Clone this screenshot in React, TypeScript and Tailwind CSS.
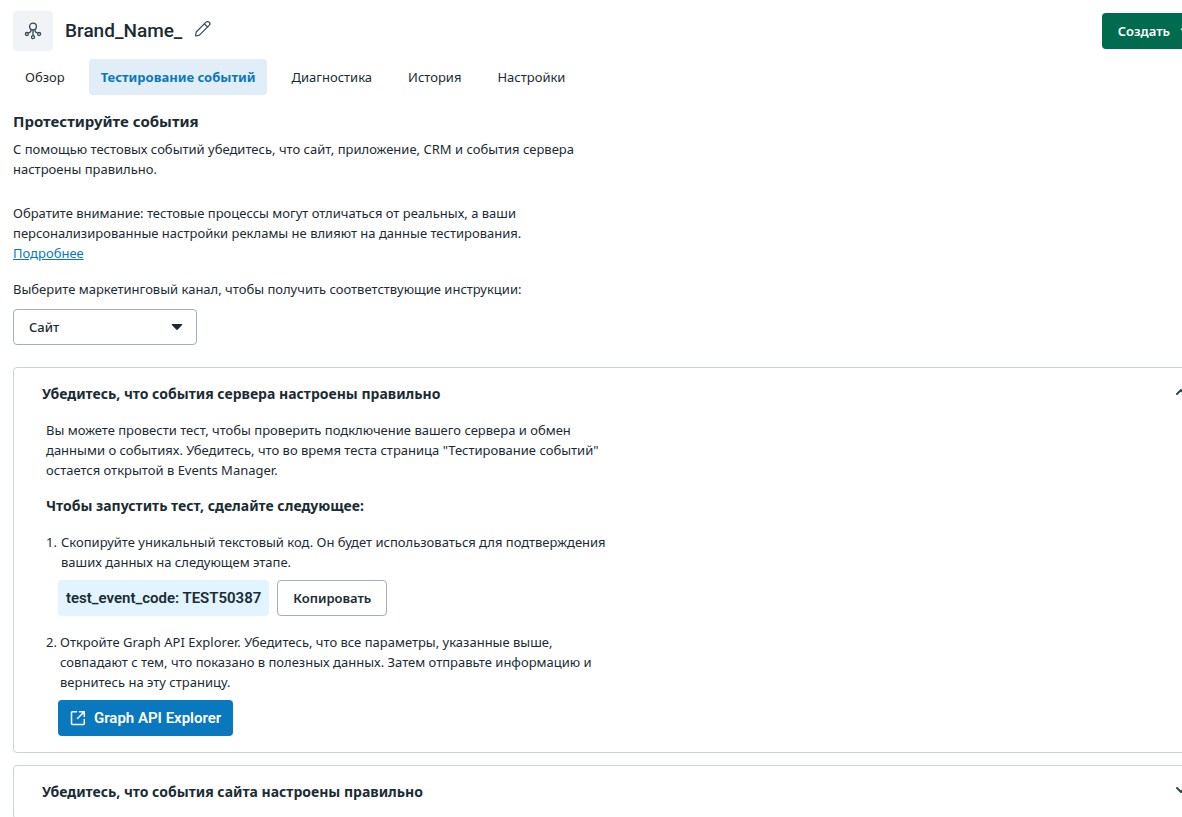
import { useState } from 'react'
import type { ReactNode } from 'react'

const TABS = ['Обзор', 'Тестирование событий', 'Диагностика', 'История', 'Настройки']

const CHANNELS = ['Сайт', 'Приложение', 'CRM']

const TEST_CODE = 'TEST50387'

function NetworkIcon() {
  return (
    <svg width="18" height="18" viewBox="0 0 18 18" fill="none" stroke="#344854" strokeWidth="1.3" aria-hidden="true">
      <circle cx="9" cy="4.5" r="3.4" />
      <circle cx="2.9" cy="12" r="1.5" />
      <circle cx="15.1" cy="12" r="1.5" />
      <circle cx="9" cy="15.2" r="1.5" />
      <path d="M9 8v5.6M7 7.500v1.200c0 .8-.5 1.300-1.200 1.600L4.300 11.200M11 7.500v1.200c0 .8.5 1.300 1.200 1.600l1.500.9" />
    </svg>
  )
}

function PencilIcon() {
  return (
    <svg width="18" height="18" viewBox="0 0 18 18" fill="none" stroke="#344854" strokeWidth="1.2" strokeLinejoin="round" aria-hidden="true">
      <path d="M1.600 15.400 2.200 12 12 2.200c.9-.9 2.300-.9 3.200 0s.9 2.300 0 3.200L5.400 15.200l-3.200.8c-.4.100-.7-.200-.6-.6z" />
      <path d="m10.400 3.800 3.200 3.200" />
    </svg>
  )
}

function OpenIcon() {
  return (
    <svg width="16" height="16" viewBox="0 0 16 16" fill="none" stroke="currentColor" strokeWidth="1.5" strokeLinecap="round" strokeLinejoin="round" aria-hidden="true">
      <path d="M6.500 1.700h-4a1 1 0 0 0-1 1v10.800a1 1 0 0 0 1 1h10.800a1 1 0 0 0 1-1v-4" />
      <path d="M9.500 1.700h4.800v4.800M14 2 7.500 8.500" />
    </svg>
  )
}

function Caret() {
  return (
    <svg width="12" height="7" viewBox="0 0 12 7" fill="currentColor" aria-hidden="true">
      <path d="M1.300.5h9.400c.6 0 .8.700.4 1.100L6.800 6c-.5.500-1.100.500-1.600 0L.9 1.600C.5 1.200.7.500 1.300.5z" />
    </svg>
  )
}

type PanelProps = {
  title: string
  open: boolean
  onToggle: () => void
  children?: ReactNode
}

function Panel({ title, open, onToggle, children }: PanelProps) {
  return (
    <section className="rounded border border-[#cbd2d9]">
      <h3>
        <button
          type="button"
          aria-expanded={open}
          onClick={onToggle}
          className="flex w-full items-center justify-between py-4 pl-7 pr-5 text-left text-sm leading-5 font-bold"
        >
          {title}
          <svg
            width="12"
            height="12"
            viewBox="0 0 12 12"
            fill="none"
            stroke="#344854"
            strokeWidth="2"
            strokeLinecap="round"
            strokeLinejoin="round"
            aria-hidden="true"
          >
            <path d={open ? 'M2 6l4-4 4 4' : 'M2 2l4 4 4-4'} />
          </svg>
        </button>
      </h3>
      {open && children}
    </section>
  )
}

export default function App() {
  const [tab, setTab] = useState(TABS[1])
  const [serverOpen, setServerOpen] = useState(true)
  const [siteOpen, setSiteOpen] = useState(false)

  return (
    <div className="h-screen overflow-hidden bg-white font-['Noto_Sans',sans-serif] text-[13px] leading-5 text-[#1c2b33]">
      {/* Content runs past the right edge of the window */}
      <div className="-mr-[26px] pl-[13px]">
        <header className="flex items-start justify-between pt-[11px]">
          <div className="flex items-center">
            <span className="flex size-10 items-center justify-center rounded bg-[#f1f4f7]">
              <NetworkIcon />
            </span>
            <h1 className="ml-3 font-['Roboto','Noto_Sans',sans-serif] text-[19px] leading-6 font-medium">Brand_Name_</h1>
            <button type="button" aria-label="Изменить название" className="mb-1 ml-3">
              <PencilIcon />
            </button>
          </div>
          <button
            type="button"
            className="mt-0.5 flex h-9 items-center gap-2.5 rounded bg-[#006b4e] px-4 font-semibold text-white"
          >
            Создать
            <Caret />
          </button>
        </header>

        <nav className="mt-2 flex gap-3">
          {TABS.map(item => (
            <button
              key={item}
              type="button"
              onClick={() => setTab(item)}
              className={`h-9 rounded px-3 ${item === tab ? 'bg-[#e1edf7] font-bold text-[#0a78be]' : ''}`}
            >
              {item}
            </button>
          ))}
        </nav>

        <h2 className="mt-4 text-[15px] leading-5 font-bold">Протестируйте события</h2>
        <div className="max-w-[580px]">
          <p className="mt-2">
            С помощью тестовых событий убедитесь, что сайт, приложение, CRM и события сервера настроены правильно.
          </p>
          <p className="mt-6">
            Обратите внимание: тестовые процессы могут отличаться от реальных, а ваши персонализированные настройки
            рекламы не влияют на данные тестирования.{' '}
            <a href="#more" className="text-[#0a78be] underline">Подробнее</a>
          </p>
        </div>

        <label htmlFor="channel" className="mt-4 block">
          Выберите маркетинговый канал, чтобы получить соответствующие инструкции:
        </label>
        <div className="relative mt-2.5 w-[184px]">
          <select
            id="channel"
            className="h-9 w-full appearance-none rounded border border-[#a3b0bc] bg-white pl-[15px] pr-8 font-medium"
          >
            {CHANNELS.map(channel => (
              <option key={channel}>{channel}</option>
            ))}
          </select>
          <span className="pointer-events-none absolute top-1/2 right-3.5 -translate-y-1/2">
            <Caret />
          </span>
        </div>

        <div className="mt-[22px] flex flex-col gap-3">
          <Panel
            title="Убедитесь, что события сервера настроены правильно"
            open={serverOpen}
            onToggle={() => setServerOpen(!serverOpen)}
          >
            <div className="px-8 pb-4">
              <p className="max-w-[570px]">
                Вы можете провести тест, чтобы проверить подключение вашего сервера и обмен данными о событиях.
                Убедитесь, что во время теста страница "Тестирование событий" остается открытой в Events Manager.
              </p>
              <h4 className="mt-4 text-sm leading-5 font-bold">Чтобы запустить тест, сделайте следующее:</h4>

              <ol className="mt-4">
                <li>
                  <div className="flex max-w-[570px]">
                    <span className="w-[15px] shrink-0">1.</span>
                    <p>
                      Скопируйте уникальный текстовый код. Он будет использоваться для подтверждения ваших данных на
                      следующем этапе.
                    </p>
                  </div>
                  <div className="mt-2 ml-3 flex gap-2">
                    <code className="flex h-9 items-center rounded bg-[#e1f4ff] px-2 font-['Roboto',sans-serif] text-[15px] font-semibold">
                      test_event_code: {TEST_CODE}
                    </code>
                    <button
                      type="button"
                      onClick={() => navigator.clipboard?.writeText(TEST_CODE)}
                      className="h-9 rounded border border-[#a3b0bc] px-[15px] font-semibold"
                    >
                      Копировать
                    </button>
                  </div>
                </li>
                <li className="mt-4">
                  <div className="flex max-w-[570px]">
                    <span className="w-[14px] shrink-0">2.</span>
                    <p>
                      Откройте Graph API Explorer. Убедитесь, что все параметры, указанные выше, совпадают с тем, что
                      показано в полезных данных. Затем отправьте информацию и вернитесь на эту страницу.
                    </p>
                  </div>
                  <a
                    href="#explorer"
                    className="mt-2 ml-3 inline-flex h-9 items-center gap-2 rounded bg-[#0a78be] px-3 font-['Roboto',sans-serif] text-[15px] font-semibold text-white"
                  >
                    <OpenIcon />
                    Graph API Explorer
                  </a>
                </li>
              </ol>
            </div>
          </Panel>

          <Panel
            title="Убедитесь, что события сайта настроены правильно"
            open={siteOpen}
            onToggle={() => setSiteOpen(!siteOpen)}
          >
            <p className="px-8 pb-4">Откройте сайт, чтобы увидеть события в реальном времени.</p>
          </Panel>
        </div>
      </div>
    </div>
  )
}
